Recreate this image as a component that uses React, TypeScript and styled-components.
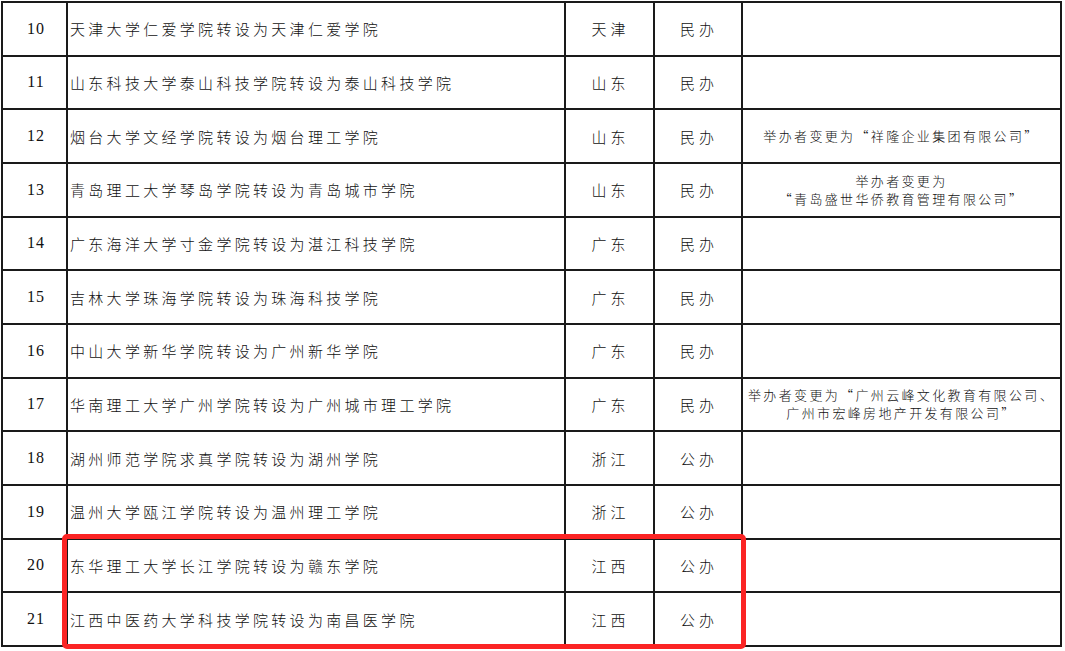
import React from 'react'
import styled, { createGlobalStyle } from 'styled-components'

const GlobalStyle = createGlobalStyle`
  html, body {
    margin: 0;
    padding: 0;
    background: #fff;
  }
  body {
    font-family: "Noto Sans CJK SC", "Liberation Serif", serif;
    color: #111;
  }
`

const Page = styled.div`
  position: relative;
  width: 1065px;
  height: 651px;
  overflow: hidden;
  padding: 1px 0 0 1px;
  box-sizing: border-box;
`

const Table = styled.table`
  border-collapse: collapse;
  table-layout: fixed;
  width: 1061px;
`

const Col = styled.col<{ $w: number }>`
  width: ${(p) => p.$w}px;
`

const Row = styled.tr`
  height: 53.67px;
`

const Cell = styled.td<{ $align?: 'left' | 'center' }>`
  border: 2px solid #1a1a1a;
  padding: 0 2px;
  text-align: ${(p) => p.$align || 'center'};
  vertical-align: middle;
  font-size: 15px;
  font-weight: 300;
  letter-spacing: 3.3px;
  white-space: nowrap;
`

const NumCell = styled(Cell)`
  font-family: "Liberation Serif", serif;
  font-size: 16px;
  letter-spacing: 1px;
  font-weight: 400;
  padding-left: 5px;
`

const ShortCell = styled(Cell)`
  letter-spacing: 4px;
  padding-left: 4px;
`

const NoteCell = styled(Cell)`
  font-size: 13px;
  letter-spacing: 2.35px;
  line-height: 18px;
  padding: 0;
`

const Highlight = styled.div`
  position: absolute;
  left: 62px;
  top: 534px;
  width: 684px;
  height: 115px;
  border: 5px solid #fb2424;
  border-radius: 5px;
  box-sizing: border-box;
  pointer-events: none;
`

type Item = {
  no: number
  name: string
  province: string
  kind: string
  note?: string[]
}

const rows: Item[] = [
  { no: 10, name: '天津大学仁爱学院转设为天津仁爱学院', province: '天津', kind: '民办' },
  { no: 11, name: '山东科技大学泰山科技学院转设为泰山科技学院', province: '山东', kind: '民办' },
  { no: 12, name: '烟台大学文经学院转设为烟台理工学院', province: '山东', kind: '民办', note: ['举办者变更为“祥隆企业集团有限公司”'] },
  { no: 13, name: '青岛理工大学琴岛学院转设为青岛城市学院', province: '山东', kind: '民办', note: ['举办者变更为', '“青岛盛世华侨教育管理有限公司”'] },
  { no: 14, name: '广东海洋大学寸金学院转设为湛江科技学院', province: '广东', kind: '民办' },
  { no: 15, name: '吉林大学珠海学院转设为珠海科技学院', province: '广东', kind: '民办' },
  { no: 16, name: '中山大学新华学院转设为广州新华学院', province: '广东', kind: '民办' },
  { no: 17, name: '华南理工大学广州学院转设为广州城市理工学院', province: '广东', kind: '民办', note: ['举办者变更为“广州云峰文化教育有限公司、', '广州市宏峰房地产开发有限公司”'] },
  { no: 18, name: '湖州师范学院求真学院转设为湖州学院', province: '浙江', kind: '公办' },
  { no: 19, name: '温州大学瓯江学院转设为温州理工学院', province: '浙江', kind: '公办' },
  { no: 20, name: '东华理工大学长江学院转设为赣东学院', province: '江西', kind: '公办' },
  { no: 21, name: '江西中医药大学科技学院转设为南昌医学院', province: '江西', kind: '公办' },
]

const App = () => {
  return (
    <Page>
      <GlobalStyle />
      <Table>
        <colgroup>
          <Col $w={65} />
          <Col $w={498} />
          <Col $w={89} />
          <Col $w={88} />
          <Col $w={319} />
        </colgroup>
        <tbody>
          {rows.map((item) => (
            <Row key={item.no}>
              <NumCell>{item.no}</NumCell>
              <Cell $align="left">{item.name}</Cell>
              <ShortCell>{item.province}</ShortCell>
              <ShortCell>{item.kind}</ShortCell>
              <NoteCell>
                {item.note?.map((line, i) => (
                  <div key={i}>{line}</div>
                ))}
              </NoteCell>
            </Row>
          ))}
        </tbody>
      </Table>
      <Highlight />
    </Page>
  )
}

export default App
